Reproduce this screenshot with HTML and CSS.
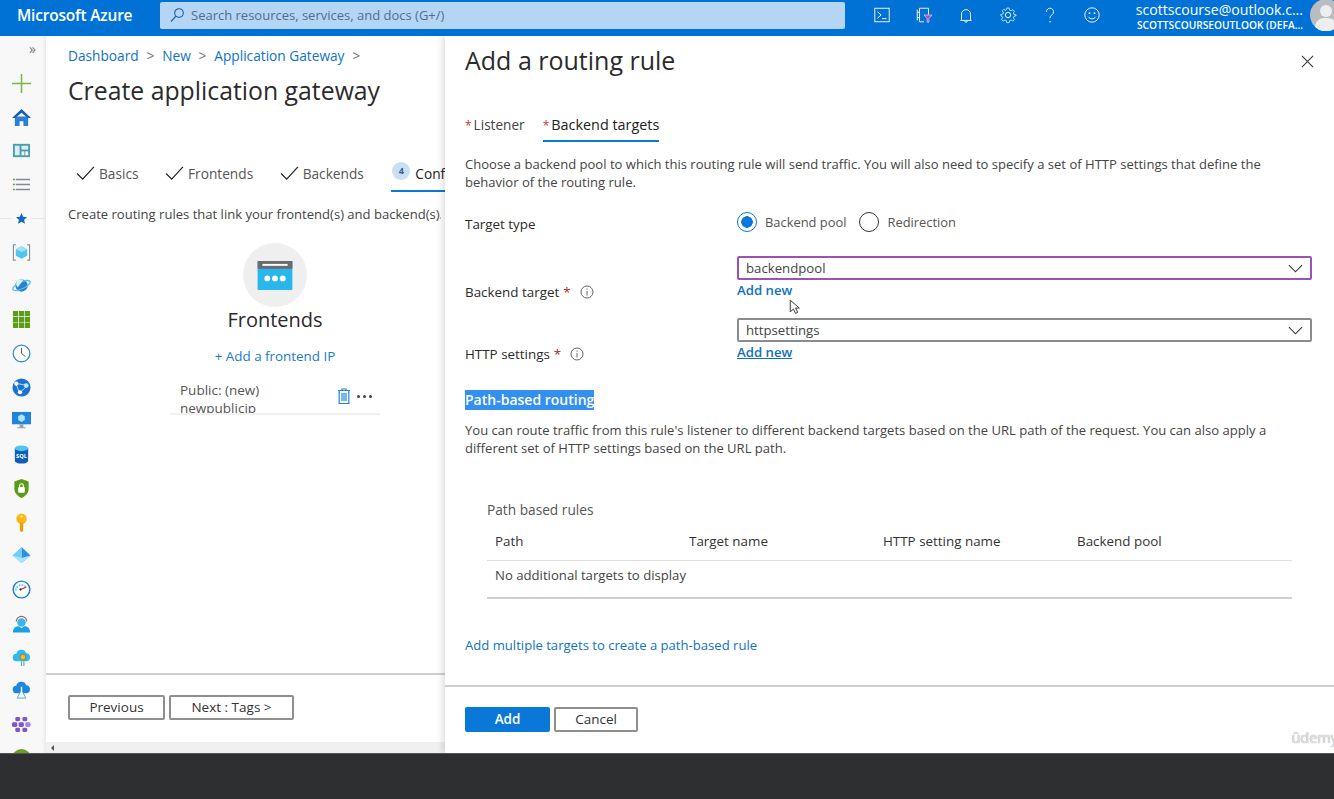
FILE: index.html
```html
<!DOCTYPE html>
<html lang="en">
<head>
<meta charset="utf-8">
<title>Create application gateway - Microsoft Azure</title>
<link rel="stylesheet" href="styles.css">
</head>
<body>
<div class="app">
  <header class="topbar">
    <div class="brand">Microsoft Azure</div>
    <div class="search">
      <svg class="search-ic" viewBox="0 0 16 16"><circle cx="10" cy="6" r="4.3" fill="none" stroke="#1a5f9e" stroke-width="1.1"/><path d="M7 9.2 2 14.5" stroke="#1a5f9e" stroke-width="1.1"/></svg>
      <span>Search resources, services, and docs (G+/)</span>
    </div>
    <div class="top-icons">
      <svg class="top-ic" viewBox="0 0 20 20"><rect x="2" y="2.500" width="16" height="15" fill="none" stroke="#fff" stroke-width="1"/><path d="M5 6.500 9 10l-4 3.500M10 14h5" fill="none" stroke="#fff"/></svg>
      <svg class="top-ic" viewBox="0 0 20 20"><path d="M15 9.500v-7H5v15h5" fill="none" stroke="#fff"/><path d="M2.500 4v12M2.500 7h2M2.500 13h2" stroke="#fff" fill="none"/><path d="M10 10h9l-3.500 4v4h-2v-4z" fill="#b146c2" stroke="#fff" stroke-width=".6"/></svg>
      <svg class="top-ic" viewBox="0 0 20 20"><path d="M5 15v-6a5 5 0 0 1 10 0v6l1 1H4zM8.500 16.500a1.500 1.500 0 0 0 3 0" fill="none" stroke="#fff"/></svg>
      <svg class="top-ic" viewBox="0 0 20 20"><circle cx="10" cy="10" r="3" fill="none" stroke="#fff"/><path d="M8.500 2h3l.5 2.500 1.800.8 2.200-1.400 2 2-1.400 2.200.8 1.800 2.500.5v1.200l-2.500.5-.8 1.800 1.400 2.200-2 2-2.200-1.400-1.800.8-.5 2.500h-3l-.5-2.500-1.800-.8-2.200 1.400-2-2 1.400-2.200-.8-1.800L1 11.200V10l2.500-.5.8-1.800-1.400-2.200 2-2 2.200 1.400L8 3.900z" fill="none" stroke="#fff" stroke-width=".9" transform="translate(1 .5) scale(.9)"/></svg>
      <svg class="top-ic" viewBox="0 0 20 20"><path d="M6 6.500a4 4 0 1 1 6.500 3.100c-1.500 1.100-2.500 2-2.500 4" fill="none" stroke="#fff"/><circle cx="10" cy="17.500" r=".8" fill="#fff"/></svg>
      <svg class="top-ic" viewBox="0 0 20 20"><circle cx="10" cy="10" r="8" fill="none" stroke="#fff"/><circle cx="7.200" cy="8" r="1" fill="#fff"/><circle cx="12.800" cy="8" r="1" fill="#fff"/><path d="M6 12c2 3 6 3 8 0" fill="none" stroke="#fff"/></svg>
    </div>
    <div class="account">
      <div class="acct-name">scottscourse@outlook.c...</div>
      <div class="acct-dir">SCOTTSCOURSEOUTLOOK (DEFA...</div>
    </div>
    <svg class="avatar" viewBox="0 0 32 32"><circle cx="16" cy="16" r="16" fill="#b9bcc0"/><circle cx="16" cy="12" r="6" fill="#eceef0"/><path d="M5 28c1-8 6-9 11-9s10 1 11 9a16 16 0 0 1-22 0z" fill="#eceef0"/></svg>
  </header>

  <main class="main">
    <nav class="sidebar">
      <div class="collapse">&raquo;</div>
      <svg class="nav-ic" viewBox="0 0 20 20"><path d="M10 0v20M0 10h20" stroke="#7ab648" stroke-width="1.600"/></svg>
      <svg class="nav-ic" viewBox="0 0 20 20"><path d="M3 9h14v10h-5v-5H8v5H3z" fill="#2f7fd6"/><path d="M10 1 0 10.500h3.500L10 5l6.500 5.500H20z" fill="#0f5fb5"/></svg>
      <svg class="nav-ic" viewBox="0 0 20 20"><rect x="1" y="3" width="18" height="14" fill="#4a9fae"/><rect x="3" y="5" width="5" height="10" fill="#d9eff2"/><rect x="10" y="5" width="7" height="4" fill="#d9eff2"/><rect x="10" y="11" width="3" height="4" fill="#fff"/><rect x="14" y="11" width="3" height="4" fill="#fff"/></svg>
      <svg class="nav-ic" viewBox="0 0 20 20"><path d="M4 4h15v1.500H4zM4 9.200h15v1.500H4zM4 14.500h15V16H4z" fill="#7f8a93"/><path d="M1 4h2v1.500H1zM1 9.200h2v1.500H1zM1 14.500h2V16H1z" fill="#5ea52e"/></svg>
      <div class="fav"><svg class="nav-ic" viewBox="-4 -4 28 28"><path d="m10 2 2.400 5.400 5.800.6-4.400 3.900 1.300 5.800L10 14.700l-5.100 3 1.300-5.800L1.800 8l5.800-.6z" fill="#1168c9"/></svg></div>
      <svg class="nav-ic" viewBox="0 0 20 20"><path d="M4 2H1.500v16H4M16 2h2.500v16H16" fill="none" stroke="#8b8f94" stroke-width="1.200"/><path d="m10 3.500 6 3v7l-6 3-6-3v-7z" fill="#50c5ee"/><path d="m10 3.500 6 3-6 3-6-3z" fill="#9be3f7"/></svg>
      <svg class="nav-ic" viewBox="0 0 20 20"><circle cx="10" cy="10" r="6.500" fill="#2a7fd0"/><ellipse cx="10" cy="10" rx="10" ry="3.500" transform="rotate(-25 10 10)" fill="none" stroke="#50c5ee" stroke-width="1.400"/><path d="M5 5.500a6 6 0 0 1 7-1.500L6 12a6 6 0 0 1-1-6.500z" fill="#d6f1fb"/></svg>
      <svg class="nav-ic" viewBox="0 0 20 20"><path d="M1 1h5.500v5.500H1zM7.300 1h5.500v5.500H7.300zM13.500 1H19v5.500h-5.500zM1 7.300h5.500v5.500H1zM7.300 7.300h5.500v5.500H7.300zM13.500 7.300H19v5.500h-5.500zM1 13.500h5.500V19H1zM7.300 13.500h5.500V19H7.300zM13.500 13.500H19V19h-5.500z" fill="#5c9d18"/></svg>
      <svg class="nav-ic" viewBox="0 0 20 20"><circle cx="10" cy="10" r="8.800" fill="#fff" stroke="#2a86dc" stroke-width="1.300"/><path d="M10 4v6l4 3" fill="none" stroke="#555" stroke-width="1"/></svg>
      <svg class="nav-ic" viewBox="0 0 20 20"><circle cx="10" cy="10" r="9.500" fill="#1a73d0"/><path d="M4 5.500 16 8 8 16z" fill="none" stroke="#bfe4f8" stroke-width="1"/><circle cx="4.500" cy="6" r="2.200" fill="#fff"/><circle cx="15" cy="8" r="2.500" fill="#bfe4f8"/><circle cx="8.500" cy="15" r="2.200" fill="#fff"/></svg>
      <svg class="nav-ic" viewBox="0 0 20 20"><rect x="0" y="1" width="20" height="13" fill="#1e86df"/><path d="m10 3.500 3.500 2v4L10 11.500l-3.500-2v-4z" fill="#aee3f8"/><path d="M8 14h4v3H8zM5.500 17h9v1.200h-9z" fill="#9aa0a6"/></svg>
      <svg class="nav-ic" viewBox="0 0 20 20"><path d="M3 3.500v13c0 1.700 3 3 7 3s7-1.300 7-3v-13z" fill="#0f5fb5"/><ellipse cx="10" cy="3.500" rx="7" ry="3" fill="#50c5ee"/><text x="10" y="13.500" class="sql">SQL</text></svg>
      <svg class="nav-ic" viewBox="0 0 20 20"><path d="M10 0 2.500 2.500v8C2.500 15.500 7 18.500 10 20c3-1.500 7.500-4.500 7.500-9.500v-8z" fill="#5c9d18"/><rect x="6.500" y="8.500" width="7" height="6" rx="1" fill="#fff"/><path d="M8 8.500V7a2 2 0 0 1 4 0v1.500" fill="none" stroke="#fff" stroke-width="1.200"/></svg>
      <svg class="nav-ic" viewBox="0 0 20 20"><circle cx="10" cy="6" r="5.500" fill="#fdb813"/><path d="M8.300 10h3.400v9l-1.700 1-1.700-1z" fill="#f29d00"/><circle cx="10" cy="3.800" r="1.200" fill="#fff3c4"/></svg>
      <svg class="nav-ic" viewBox="0 0 20 20"><path d="M10 1 19.500 10 10 18z" fill="#2f8fe0"/><path d="M10 1 .5 10 10 18z" fill="#6fd0f5"/><path d="M10 12.500 19.500 10 10 18 .5 10z" fill="#a5e5fb"/></svg>
      <svg class="nav-ic" viewBox="0 0 20 20"><circle cx="10" cy="10" r="8.800" fill="#fff" stroke="#1f7fd8" stroke-width="1.500"/><path d="M4 11a6 6 0 0 1 11-3" fill="none" stroke="#6fd0f5" stroke-width="2" stroke-dasharray="2 1"/><path d="m9 10 6-2.500" stroke="#d13a2a" stroke-width="1.200"/><circle cx="9" cy="10" r="1.200" fill="#333"/></svg>
      <svg class="nav-ic" viewBox="0 0 20 20"><path d="M4.500 8a5.500 5.500 0 0 1 11 0" fill="none" stroke="#8c6a66" stroke-width="1.200"/><circle cx="10" cy="9" r="4.500" fill="#35b8ee"/><path d="M1 19.500c0-5 3-6.500 6-6.500l3 2 3-2c3 0 6 1.500 6 6.500z" fill="#1ba1e2"/></svg>
      <svg class="nav-ic" viewBox="0 0 20 20"><path d="M5 14a4 4 0 0 1-.5-8A5.500 5.500 0 0 1 15 5.500a4.300 4.300 0 0 1 .5 8.500z" fill="#32b8ec"/><circle cx="11.500" cy="9.500" r="3" fill="#fdb813" stroke="#555" stroke-width=".5"/><path d="M10 14v5M12.500 14v5" stroke="#5fb0a0" stroke-width="1.200"/></svg>
      <svg class="nav-ic" viewBox="0 0 20 20"><path d="M5 13a4 4 0 0 1-.5-8A5.500 5.500 0 0 1 15 4.500 4.300 4.300 0 0 1 15.500 13z" fill="#1e86df"/><path d="M8.500 6h3M9 6v5l-3.500 7h9L11 11V6" fill="#fff" stroke="#35a0c8" stroke-width=".9"/></svg>
      <svg class="nav-ic" viewBox="0 0 20 20"><g fill="#7b57c8"><rect x="3.500" y="2" width="5" height="4.500" rx="1.500"/><rect x="11" y="2" width="5" height="4.500" rx="1.500"/><rect x="0" y="7.500" width="5.500" height="5" rx="1.500"/><rect x="7" y="7.500" width="5.500" height="5" rx="1.500"/><rect x="14" y="7.500" width="5.500" height="5" rx="1.500" fill="#a684e0"/><rect x="3.500" y="13.500" width="5" height="4.500" rx="1.500"/><rect x="11" y="13.500" width="5" height="4.500" rx="1.500"/></g></svg>
      <svg class="nav-ic" viewBox="0 0 20 20"><circle cx="10" cy="10" r="10" fill="#6c9d23"/></svg>
    </nav>

    <section class="blade">
      <div class="blade-body">
        <div class="crumbs">
          <a>Dashboard</a><span class="sep">&gt;</span><a>New</a><span class="sep">&gt;</span><a>Application Gateway</a><span class="sep">&gt;</span>
        </div>
        <h1 class="page-title">Create application gateway</h1>
        <div class="steps">
          <div class="step"><svg class="check" viewBox="0 0 20 16"><path d="m1 8 6 6L19 1" fill="none" stroke="#222" stroke-width="1.300"/></svg>Basics</div>
          <div class="step"><svg class="check" viewBox="0 0 20 16"><path d="m1 8 6 6L19 1" fill="none" stroke="#222" stroke-width="1.300"/></svg>Frontends</div>
          <div class="step"><svg class="check" viewBox="0 0 20 16"><path d="m1 8 6 6L19 1" fill="none" stroke="#222" stroke-width="1.300"/></svg>Backends</div>
          <div class="step active"><span class="num">4</span>Configuration</div>
        </div>
        <p class="blade-desc">Create routing rules that link your frontend(s) and backend(s). This</p>
        <div class="frontends">
          <div class="fe-circle">
            <svg class="fe-ic" viewBox="0 0 36 30"><rect width="36" height="30" rx="1" fill="#29b6ea"/><rect width="36" height="8" fill="#6b6b6f"/><rect x="5" y="3" width="26" height="2" fill="#fff"/><circle cx="10" cy="18" r="3" fill="#fff"/><circle cx="18" cy="18" r="3" fill="#fff"/><circle cx="26" cy="18" r="3" fill="#fff"/></svg>
          </div>
          <h2 class="fe-title">Frontends</h2>
          <a class="fe-add">+ Add a frontend IP</a>
          <div class="fe-row">
            <div class="fe-text">Public: (new) newpublicip</div>
            <svg class="trash" viewBox="0 0 14 16"><path d="M1 2.500h12M5 2.500V1h4v1.500M2.200 2.500V15.500h9.600V2.500M5 5v8M7 5v8M9 5v8" fill="none" stroke="#1f86d8" stroke-width="1.200"/></svg>
            <div class="dots"><i></i><i></i><i></i></div>
          </div>
        </div>
      </div>
      <div class="blade-foot">
        <button class="btn prev">Previous</button>
        <button class="btn next">Next : Tags &gt;</button>
      </div>
      <div class="hscroll"><span class="arrow"></span></div>
    </section>

    <section class="panel">
      <div class="panel-body">
        <div class="panel-head">
          <h2 class="panel-title">Add a routing rule</h2>
          <svg class="close" viewBox="0 0 14 14"><path d="m1 1 12 12M13 1 1 13" stroke="#333" stroke-width="1.100"/></svg>
        </div>
        <div class="tabs">
          <div class="tab"><span class="req">*</span>Listener</div>
          <div class="tab on"><span class="req">*</span>Backend targets</div>
        </div>
        <p class="para first">Choose a backend pool to which this routing rule will send traffic. You will also need to specify a set of HTTP settings that define the behavior of the routing rule.</p>

        <div class="form">
          <div class="row row-type">
            <div class="lbl">Target type</div>
            <div class="radios">
              <label class="radio"><span class="rb on"></span>Backend pool</label>
              <label class="radio"><span class="rb"></span>Redirection</label>
            </div>
          </div>
          <div class="row row-target">
            <div class="lbl">Backend target <b>*</b><svg class="info" viewBox="0 0 14 14"><circle cx="7" cy="7" r="6" fill="none" stroke="#666"/><path d="M7 6v4.500M7 3.500v1.200" stroke="#666"/></svg></div>
            <div class="ctl">
              <div class="select focus">backendpool<svg class="chev" viewBox="0 0 16 9"><path d="m1 1 7 7 7-7" fill="none" stroke="#333" stroke-width="1.200"/></svg></div>
              <a class="addnew">Add new</a>
            </div>
          </div>
          <div class="row row-http">
            <div class="lbl">HTTP settings <b>*</b><svg class="info" viewBox="0 0 14 14"><circle cx="7" cy="7" r="6" fill="none" stroke="#666"/><path d="M7 6v4.500M7 3.500v1.200" stroke="#666"/></svg></div>
            <div class="ctl">
              <div class="select">httpsettings<svg class="chev" viewBox="0 0 16 9"><path d="m1 1 7 7 7-7" fill="none" stroke="#333" stroke-width="1.200"/></svg></div>
              <a class="addnew under">Add new</a>
            </div>
          </div>
        </div>

        <h3 class="section-h"><span class="sel">Path-based routing</span></h3>
        <p class="para">You can route traffic from this rule's listener to different backend targets based on the URL path of the request. You can also apply a different set of HTTP settings based on the URL path.</p>

        <div class="rules">
          <div class="rules-cap">Path based rules</div>
          <div class="rules-grid rules-head"><span>Path</span><span>Target name</span><span>HTTP setting name</span><span>Backend pool</span></div>
          <div class="rules-empty">No additional targets to display</div>
        </div>
        <a class="multi">Add multiple targets to create a path-based rule</a>
      </div>
      <div class="panel-foot">
        <button class="btn primary">Add</button>
        <button class="btn cancel">Cancel</button>
      </div>
      <div class="watermark">ûdemy</div>
      <svg class="cursor" viewBox="0 0 10 15"><path d="M1 1v11l3-2.500 2 4 2-1-2-4h3.500z" fill="#fff" stroke="#333" stroke-width=".9"/></svg>
    </section>
  </main>
  <footer class="player"></footer>
</div>
</body>
</html>
```

FILE: styles.css
```css
* { box-sizing: border-box; }
html, body { margin: 0; height: 100%; overflow: hidden; }
body { font-family: "Open Sans", "Noto Sans", sans-serif; color: #333; font-size: 13.5px; background: #fff; }
h1, h2, h3, p { margin: 0; font-weight: 400; }
a { color: #0f72c4; }
.app { width: 1334px; height: 799px; display: flex; flex-direction: column; }

.topbar { height: 36px; flex: none; background: #0072d6; color: #fff; display: flex; align-items: center; overflow: hidden; padding-bottom: 6px; }
.brand { width: 160px; flex: none; padding-left: 17px; font-size: 15.5px; font-weight: 600; letter-spacing: -.2px; }
.search { width: 685px; flex: none; height: 27px; margin-top: 1px; background: #b4d5f3; border-radius: 2px; display: flex; align-items: center; color: #4d6f8f; font-size: 13px; padding: 0 0 2px 9px; }
.search-ic { width: 16px; height: 16px; margin-right: 6px; }
.top-icons { width: 278px; flex: none; padding-left: 28px; display: flex; gap: 24px; }
.top-ic { width: 18px; height: 18px; flex: none; }
.account { width: 180px; text-align: right; line-height: 1; padding-right: 7px; margin-left: 7px; flex: none; white-space: nowrap; overflow: hidden; padding-top: 3px; }
.acct-name { font-size: 14.1px; margin-bottom: 3px; }
.acct-dir { font-size: 10.2px; font-weight: 600; }
.avatar { width: 32px; height: 32px; flex: none; }

.main { flex: 1; display: flex; min-height: 0; overflow: hidden; position: relative; }
.sidebar { width: 46px; flex: none; background: #f8f8f8; box-shadow: inset -4px 0 5px -4px rgba(0,0,0,.12); display: flex; flex-direction: column; align-items: center; overflow: hidden; padding: 3px 3px 0 0; gap: 14.75px; }
.collapse { height: 20px; width: 100%; text-align: right; padding-right: 7px; color: #777; font-size: 14px; line-height: 20px; }
.nav-ic { width: 19px; height: 19px; flex: none; display: block; }
.fav { width: 46px; margin-right: -3px; padding-left: 12px; height: 19px; flex: none; background: linear-gradient(#e6e6e6, #e6e6e6) 0 9px / 100% 1px no-repeat; }
.fav .nav-ic { background: #f8f8f8; }
.sql { font: 700 6px "Open Sans", sans-serif; fill: #fff; text-anchor: middle; }

.blade { width: 399px; flex: none; display: flex; flex-direction: column; background: #fff; }
.blade-body { flex: 1; padding: 9px 0 0 22px; overflow: hidden; min-height: 0; }
.crumbs { display: flex; align-items: center; height: 20px; font-size: 13.7px; color: #0f72c4; white-space: nowrap; }
.sep { color: #777; margin: 0 7.75px; font-size: 14px; }
.page-title { font-size: 24.800px; font-weight: 500; color: #2b2b2b; margin-top: 8px; line-height: 34px; white-space: nowrap; }
.steps { display: flex; margin-top: 55px; padding-left: 8px; height: 30px; width: 377px; overflow: hidden; white-space: nowrap; color: #555; font-size: 13.7px; line-height: 24px; }
.step { display: flex; align-items: flex-start; margin-right: 26.5px; flex: none; }
.check { width: 19px; height: 15px; margin: 4px 4px 0 0; }
.step.active { color: #222; border-bottom: 2px solid #0a78d8; height: 30px; margin: 0 0 0 1px; padding-left: 1px; }
.num { width: 18px; height: 18px; border-radius: 50%; background: #c7e0f4; color: #33628c; font-size: 9px; font-weight: 700; text-align: center; line-height: 17px; margin-right: 5px; }
.blade-desc { font-size: 13.05px; color: #444; white-space: nowrap; margin-top: 12px; line-height: 20px; width: 373px; overflow: hidden; }
.frontends { width: 210px; margin-left: 102px; margin-top: 19px; display: flex; flex-direction: column; align-items: center; }
.fe-circle { width: 64px; height: 64px; border-radius: 50%; background: #efefef; display: flex; align-items: center; justify-content: center; }
.fe-ic { width: 36px; height: 29px; }
.fe-title { font-size: 20px; font-weight: 500; color: #2b2b2b; line-height: 25px; }
.fe-add { font-size: 13.4px; color: #1b7bcb; margin-top: 14px; line-height: 20px; }
.fe-row { width: 100%; height: 34px; margin-top: 15px; border-bottom: 2px solid #f1f1f1; display: flex; overflow: hidden; padding-left: 10px; }
.fe-text { width: 110px; font-size: 13.5px; line-height: 18px; color: #555; margin-right: 47px; }
.trash { width: 14px; height: 16px; margin-top: 7px; flex: none; }
.dots { display: flex; gap: 3px; margin: 14px 0 0 6px; height: 3px; }
.dots i { width: 3px; height: 3px; border-radius: 50%; background: #444; display: block; }
.blade-foot { height: 69px; flex: none; border-top: 2px solid #cfcfcf; padding: 20px 0 0 22px; display: flex; gap: 4px; align-items: flex-start; }
.btn { font: inherit; height: 25px; background: #fff; border: 2px solid #8f8f8f; border-radius: 2px; color: #333; padding: 0 0 1px; font-size: 13.5px; line-height: 20px; }
.prev { width: 97px; }
.next { width: 125px; }
.hscroll { height: 11px; flex: none; background: #f0f0f0; padding: 3px 0 0 5px; }
.arrow { display: block; width: 0; height: 0; border: 3px solid transparent; border-right: 3px solid #555; border-left: 0; }

.panel { flex: 1; min-width: 0; display: flex; flex-direction: column; box-shadow: -3px 0 6px rgba(0,0,0,.12); background: #fff; position: relative; }
.panel-body { flex: 1; padding: 0 22px 0 20px; min-height: 0; }
.panel-head { height: 50px; display: flex; align-items: flex-start; justify-content: space-between; }
.panel-title { font-size: 25px; font-weight: 500; color: #2b2b2b; line-height: 48px; }
.close { width: 13px; height: 13px; margin-top: 19px; margin-right: -2px; }
.tabs { display: flex; gap: 18px; margin-top: 26px; height: 30px; font-size: 13.6px; line-height: 26px; color: #444; }
.tab { height: 30px; padding-bottom: 4px; white-space: nowrap; }
.tab.on { color: #222; border-bottom: 2px solid #0a78d8; font-weight: 500; font-size: 14.4px; }
.req { color: #c33; margin-right: 2px; font-size: 12px; }
.para { font-size: 13.05px; line-height: 18px; color: #444; width: 810px; }
.para.first { margin-top: 13px; }
.form { margin-top: 13px; }
.row { display: flex; }
.lbl { width: 272px; flex: none; font-size: 13.4px; font-weight: 500; color: #2b2b2b; display: flex; align-items: center; height: 20px; white-space: nowrap; }
.lbl b { color: #b3261e; font-weight: 400; margin-left: 4px; }
.info { width: 14px; height: 14px; margin-left: 9px; }
.row-type { height: 52px; align-items: flex-start; }
.row-type .lbl { margin-top: 10px; }
.radios { display: flex; gap: 13px; margin-top: 6px; height: 24px; }
.radio { display: flex; align-items: center; gap: 8px; color: #555; font-size: 12.9px; }
.rb { width: 20px; height: 20px; border-radius: 50%; border: 1.500px solid #333; display: block; }
.rb.on { border-color: #0a78d8; background: radial-gradient(circle, #0a78d8 0 5.5px, #fff 6px); }
.row-target { height: 62px; }
.row-target .lbl { margin-top: 26px; }
.row-http { height: 44px; }
.row-http .lbl { margin-top: 26px; }
.ctl { flex: 1; min-width: 0; }
.select { height: 24px; border: 2px solid #8c8c8c; border-radius: 2px; display: flex; align-items: center; justify-content: space-between; padding: 0 7px; font-size: 13.2px; color: #444; }
.select.focus { border-color: #9b52b5; }
.chev { width: 15px; height: 9px; }
.addnew { display: block; font-size: 13.2px; font-weight: 600; line-height: 20px; color: #0f6fbe; }
.addnew.under { text-decoration: underline; }
.section-h { margin-top: 28px; font-size: 14px; font-weight: 600; line-height: 20px; height: 20px; }
.sel { background: #3390f0; color: #fff; display: inline-block; }
.section-h + .para { margin-top: 11px; }
.rules { margin: 43px 20px 0 22px; font-size: 13.4px; }
.rules-cap { line-height: 20px; color: #555; font-size: 13.7px; }
.rules-grid { display: grid; grid-template-columns: repeat(4, 194px); padding-left: 8px; }
.rules-head { margin-top: 11px; height: 30px; line-height: 20px; font-weight: 500; color: #333; border-bottom: 1px solid #ddd; }
.rules-empty { height: 38px; padding-left: 8px; line-height: 26px; padding-top: 1px; color: #444; border-bottom: 2px solid #cfcfcf; font-size: 13.15px; }
.multi { display: block; margin-top: 36px; line-height: 20px; color: #0f72c4; font-size: 13.1px; }
.panel-foot { height: 68px; flex: none; border-top: 2px solid #cfcfcf; padding: 20px 0 0 20px; display: flex; gap: 4px; align-items: flex-start; }
.primary { width: 85px; background: #0a78d8; border-color: #0a78d8; color: #fff; font-weight: 600; }
.cancel { width: 84px; }
.watermark { position: absolute; right: -4px; bottom: 6px; font-size: 14.5px; color: #e2e2e2; text-shadow: 0 0 1px #888; }
.cursor { position: absolute; left: 344px; top: 263px; width: 11px; height: 16px; }
.player { height: 46px; flex: none; background: #2e2f31; border-top: 1px solid #555; }
```
